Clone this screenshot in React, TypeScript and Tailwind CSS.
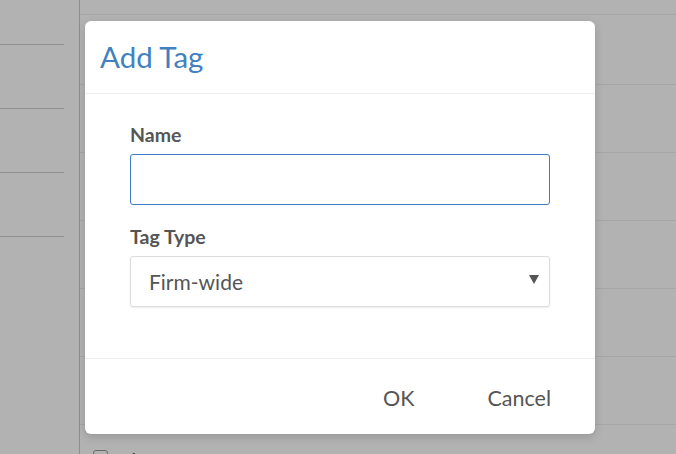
import React from "react";

const rows = [0, 1, 2, 3, 4];

export default function App() {
  return (
    <div className="relative h-[454px] w-[676px] overflow-hidden bg-white font-['Lato','Liberation_Sans',sans-serif] text-[#555]">
      {/* page behind the dialog */}
      <div className="flex h-full">
        <div className="flex w-[80px] shrink-0 border-r border-[#cccccc]">
          <div className="flex w-[64px] flex-col">
            <div className="h-[44px] shrink-0" />
            {[0, 1, 2, 3].map((i) => (
              <div key={i} className="h-[64px] shrink-0 border-t border-[#cccccc]" />
            ))}
          </div>
        </div>
        <div className="flex flex-1 flex-col">
          <div className="h-[15px] shrink-0 border-b border-[#eeeeee]" />
          <div className="h-[70px] shrink-0 border-b border-[#eeeeee]" />
          {rows.map((i) => (
            <div key={i} className="h-[68px] shrink-0 border-b border-[#eeeeee]" />
          ))}
          <div className="flex shrink-0 items-start gap-[23px] pl-[13px] pt-[25px]">
            <div className="h-[15px] w-[15px] shrink-0 rounded-[3px] border border-[#999]" />
            <span className="-mt-[3px] text-[20px] leading-[24px]">Import</span>
          </div>
        </div>
      </div>

      {/* backdrop + dialog */}
      <div className="absolute inset-0 bg-black/30">
        <div className="ml-[85px] mt-[21px] flex h-[413px] w-[510px] flex-col rounded-[6px] bg-white shadow-[0_3px_9px_rgba(0,0,0,0.15)]">
          <div className="flex h-[73px] shrink-0 items-center border-b border-[#eeeeee] px-[15px]">
            <h2 className="text-[29.5px] leading-none text-[#4281c0]">Add Tag</h2>
          </div>

          <div className="flex flex-1 flex-col px-[45px] pt-[29px]">
            <label className="mb-[7px] text-[19.5px] font-bold leading-[24px] text-[#555]">Name</label>
            <input
              className="h-[51px] w-[420px] shrink-0 rounded-[3px] border border-[#3d7ec2] px-[18px] text-[21px] outline-none"
              type="text"
            />
            <label className="mb-[7px] mt-[20px] text-[19.5px] font-bold leading-[24px] text-[#555]">
              Tag Type
            </label>
            <div className="flex h-[51px] w-[420px] shrink-0 items-center justify-between rounded-[3px] border border-[#dddddd] pl-[18px] pr-[10px] shadow-[0_1px_2px_rgba(0,0,0,0.08)]">
              <span className="text-[21px] text-[#555]">Firm-wide</span>
              <svg width="10" height="9" viewBox="0 0 10 9" className="-mt-[4px]">
                <path d="M0 0H10L5 9Z" fill="#555" />
              </svg>
            </div>
          </div>

          <div className="flex h-[76px] shrink-0 items-center justify-end gap-[33px] border-t border-[#eeeeee] pr-[24px] pt-[3px]">
            <button className="px-[20px] text-[21.5px] text-[#555]">OK</button>
            <button className="px-[20px] text-[21.5px] text-[#555]">Cancel</button>
          </div>
        </div>
      </div>
    </div>
  );
}
